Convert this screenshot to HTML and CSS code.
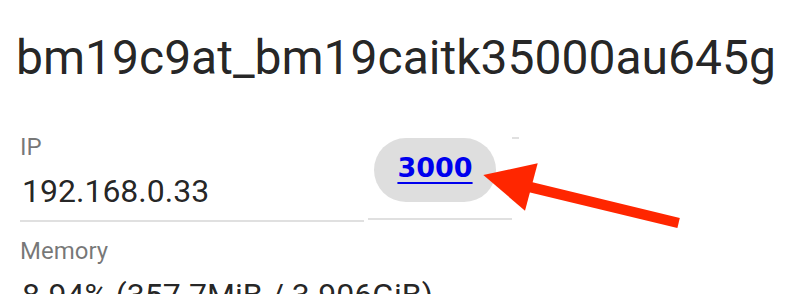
FILE: index.html
```html
<!DOCTYPE html>
<html lang="en">
<head>
<meta charset="utf-8">
<title>Container</title>
<link rel="stylesheet" href="styles.css">
</head>
<body>
<div class="page">
  <h1 class="title">bm19c9at_bm19caitk35000au645g</h1>
  <div class="row">
    <div class="field field-ip">
      <span class="label">IP</span>
      <span class="value">192.168.0.33</span>
    </div>
    <div class="field-port">
      <span class="chip"><a class="port-link" href="#">3000</a></span>
    </div>
    <span class="stub"></span>
  </div>
  <div class="field field-mem">
    <span class="label">Memory</span>
    <span class="value">8.94% (357.7MiB / 3.906GiB)</span>
  </div>
  <svg class="annot" width="796" height="294" viewBox="0 0 796 294" aria-hidden="true">
    <line x1="522" y1="185.2" x2="678.6" y2="223" stroke="#ff2600" stroke-width="10.5" stroke-linecap="butt"/>
    <polygon points="483.3,175 537.7,163.3 525,210.7" fill="#ff2600"/>
  </svg>
</div>
</body>
</html>
```
FILE: styles.css
```css
html, body {
  margin: 0;
  padding: 0;
  overflow: hidden;
  background: #ffffff;
}

.page {
  position: relative;
  width: 796px;
  height: 294px;
  overflow: hidden;
  padding-left: 16px;
  box-sizing: border-box;
  font-family: Roboto, "Liberation Sans", sans-serif;
}

.title {
  margin: 26px 0 0 0;
  font-size: 48px;
  line-height: 64px;
  font-weight: 400;
  color: rgba(0, 0, 0, 0.87);
}

.row {
  display: flex;
  align-items: flex-start;
  margin-top: 43px;
  margin-left: 4px;
}

.field {
  display: flex;
  flex-direction: column;
  width: 344px;
  padding-bottom: 10px;
  border-bottom: 2px solid #e0e0e0;
}

.label {
  font-size: 24px;
  line-height: 28px;
  color: rgba(0, 0, 0, 0.54);
}

.value {
  margin-top: 11px;
  padding-left: 2px;
  font-size: 32px;
  line-height: 38px;
  color: rgba(0, 0, 0, 0.87);
  white-space: nowrap;
}

.field-port {
  width: 144px;
  margin-left: 4px;
  padding-top: 5px;
  padding-bottom: 16px;
  border-bottom: 2px solid #e0e0e0;
}

.chip {
  display: flex;
  align-items: center;
  justify-content: center;
  box-sizing: border-box;
  width: 122px;
  height: 64px;
  margin-left: 6px;
  padding-bottom: 4px;
  border-radius: 32px;
  background: #dedede;
}

.port-link {
  font-family: "DejaVu Sans", sans-serif;
  font-weight: 700;
  font-size: 27px;
  line-height: 30px;
  color: #0000ee;
  text-decoration: underline;
  text-decoration-thickness: 2px;
  text-underline-offset: 5px;
}

.stub {
  width: 7px;
  height: 2px;
  margin-top: 4px;
  background: #e0e0e0;
}

.field-mem {
  margin-top: 15px;
  margin-left: 4px;
}

.annot {
  position: absolute;
  left: 0;
  top: 0;
}
```
